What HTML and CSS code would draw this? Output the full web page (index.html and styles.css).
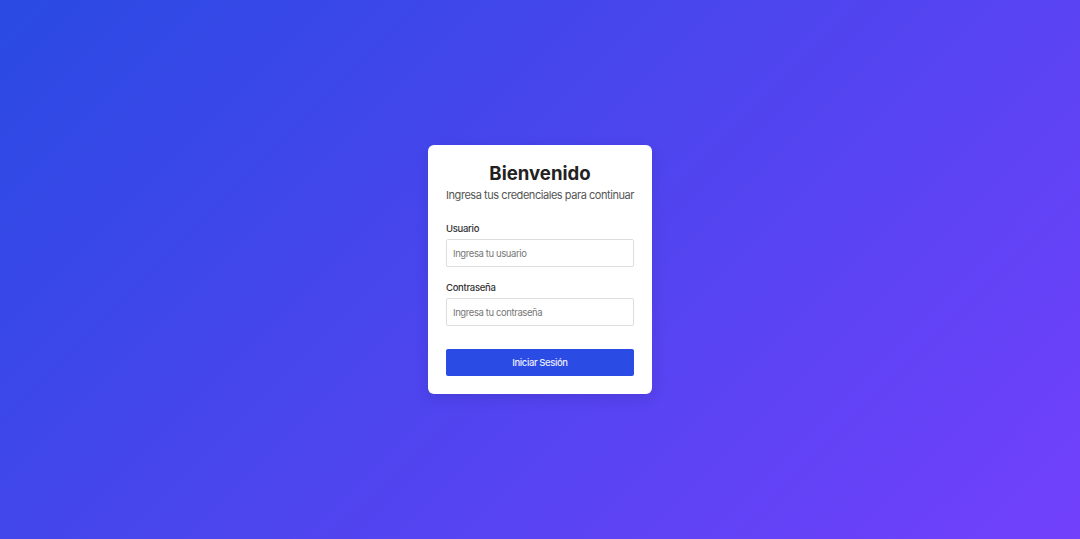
FILE: index.html
```html
<!DOCTYPE html>
<html lang="es">
<head>
<meta charset="utf-8">
<title>Iniciar Sesión</title>
<link rel="stylesheet" href="styles.css">
</head>
<body>
<main class="page">
  <form class="card">
    <h1 class="title">Bienvenido</h1>
    <p class="subtitle">Ingresa tus credenciales para continuar</p>
    <div class="field">
      <label class="label" for="user">Usuario</label>
      <input class="input" id="user" type="text" placeholder="Ingresa tu usuario">
    </div>
    <div class="field">
      <label class="label" for="pass">Contraseña</label>
      <input class="input" id="pass" type="password" placeholder="Ingresa tu contraseña">
    </div>
    <button class="button" type="button">Iniciar Sesión</button>
  </form>
</main>
</body>
</html>
```

FILE: styles.css
```css
* { box-sizing: border-box; }
html, body { margin: 0; height: 100%; }
body {
  font-family: Inter, "Noto Sans", "Liberation Sans", sans-serif;
  background: linear-gradient(135deg, #2a4ae3 0%, #7240fb 100%);
}
.page {
  height: 539px;
  display: flex;
  align-items: center;
  justify-content: center;
}
.card {
  width: 224px;
  background: #fff;
  border-radius: 6px;
  padding: 16px 18px 18px;
  box-shadow: 0 4px 14px rgba(20, 20, 80, 0.15);
  display: flex;
  flex-direction: column;
}
.title {
  margin: 0;
  text-align: center;
  font-size: 18.6px;
  line-height: 24px;
  font-weight: 700;
  color: #222;
  letter-spacing: 0;
}
.subtitle {
  margin: 1px 0 17px;
  text-align: center;
  font-size: 11px;
  line-height: 18px;
  letter-spacing: -0.45px;
  color: #555;
  white-space: nowrap;
}
.field {
  display: flex;
  flex-direction: column;
  margin-bottom: 13px;
}
.field + .field { margin-bottom: 23px; }
.label {
  font-size: 9.5px;
  line-height: 14px;
  letter-spacing: -0.3px;
  font-weight: 500;
  color: #333;
  margin-top: 1px;
  margin-bottom: 3px;
}
.input {
  height: 28px;
  border: 1px solid #ddd;
  border-radius: 2px;
  padding: 0 6px;
  font-family: inherit;
  font-size: 9.5px;
  letter-spacing: -0.4px;
  color: #333;
  outline: none;
}
.input::placeholder { color: #777; }
.button {
  height: 27px;
  border: none;
  border-radius: 2px;
  background: #2b4be5;
  color: #e8ebff;
  font-family: inherit;
  font-size: 9.5px;
  letter-spacing: -0.4px;
  font-weight: 500;
  cursor: pointer;
}
```
